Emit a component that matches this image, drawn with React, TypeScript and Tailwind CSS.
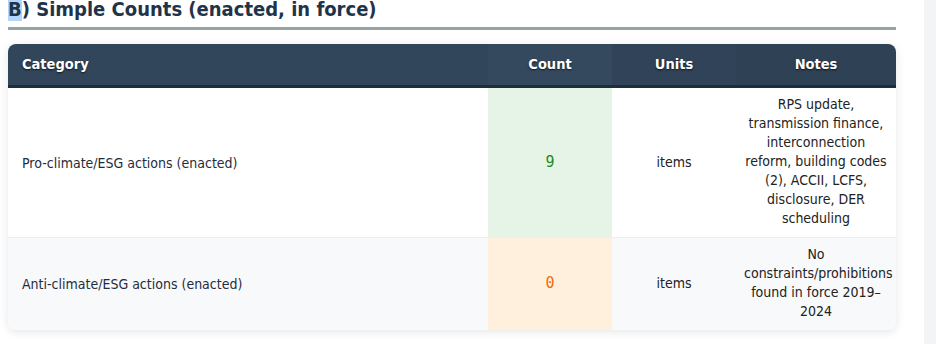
export default function App() {
  const rows = [
    {
      category: "Pro-climate/ESG actions (enacted)",
      count: "9",
      tone: "pro",
      units: "items",
      notes: ["RPS update,", "transmission finance,", "interconnection", "reform, building codes", "(2), ACCII, LCFS,", "disclosure, DER", "scheduling"],
    },
    {
      category: "Anti-climate/ESG actions (enacted)",
      count: "0",
      tone: "anti",
      units: "items",
      notes: ["No", "constraints/prohibitions", "found in force 2019–", "2024"],
    },
  ];

  return (
    <div className="flex w-[936px] h-[344px] overflow-hidden bg-white font-['DejaVu_Sans_Condensed','DejaVu_Sans',sans-serif]">
      <div className="w-[924px] bg-white pl-2 pr-[28px]">
        <h2 className="-mt-[5px] pb-[4px] border-b-[3px] border-[#95a5a6] text-[20px] leading-7 font-bold text-[#1f3349]">
          <span className="bg-[#b3d4fc]">B</span>) Simple Counts (enacted, in force)
        </h2>

        <div className="mt-[14px] rounded-lg shadow-[0_2px_10px_rgba(0,0,0,0.10)] overflow-hidden">
          <table className="w-full table-fixed border-collapse text-[14px] leading-[19px]">
            <thead>
              <tr className="text-white font-bold text-[14.5px] border-b-[3px] border-[#1f2d3a] [text-shadow:0_1px_2px_rgba(0,0,0,0.7)]">
                <th className="w-[480px] h-[42px] bg-[#32465b] text-left px-[14px]">Category</th>
                <th className="w-[124px] bg-[#35495e] text-center">Count</th>
                <th className="w-[124px] bg-[#304358] text-center">Units</th>
                <th className="w-[160px] bg-[#2e4155] text-center">Notes</th>
              </tr>
            </thead>
            <tbody>
              {rows.map((r, i) => (
                <tr key={r.category} className={i === 0 ? "bg-white border-b border-[#eceff2]" : "bg-[#f8f9fa]"}>
                  <td className="px-[14px] pt-[10px] pb-2 text-[#1f2d3d]">{r.category}</td>
                  <td
                    className={
                      r.tone === "pro"
                        ? "bg-[#e6f4e7] text-center text-[#1f8a1f] font-['DejaVu_Sans_Mono',monospace] text-[15px]"
                        : "bg-[#fff0de] text-center text-[#f06d0c] font-['DejaVu_Sans_Mono',monospace] text-[15px]"
                    }
                  >
                    {r.count}
                  </td>
                  <td className="text-center text-[#222]">{r.units}</td>
                  <td className="px-2 pt-[7px] pb-[9px] text-center text-[#222]">
                    {r.notes.map((line) => (
                      <div key={line} className="whitespace-nowrap">{line}</div>
                    ))}
                  </td>
                </tr>
              ))}
            </tbody>
          </table>
        </div>
      </div>
      <div className="flex-1 bg-[#f3f4f5]" />
    </div>
  );
}
